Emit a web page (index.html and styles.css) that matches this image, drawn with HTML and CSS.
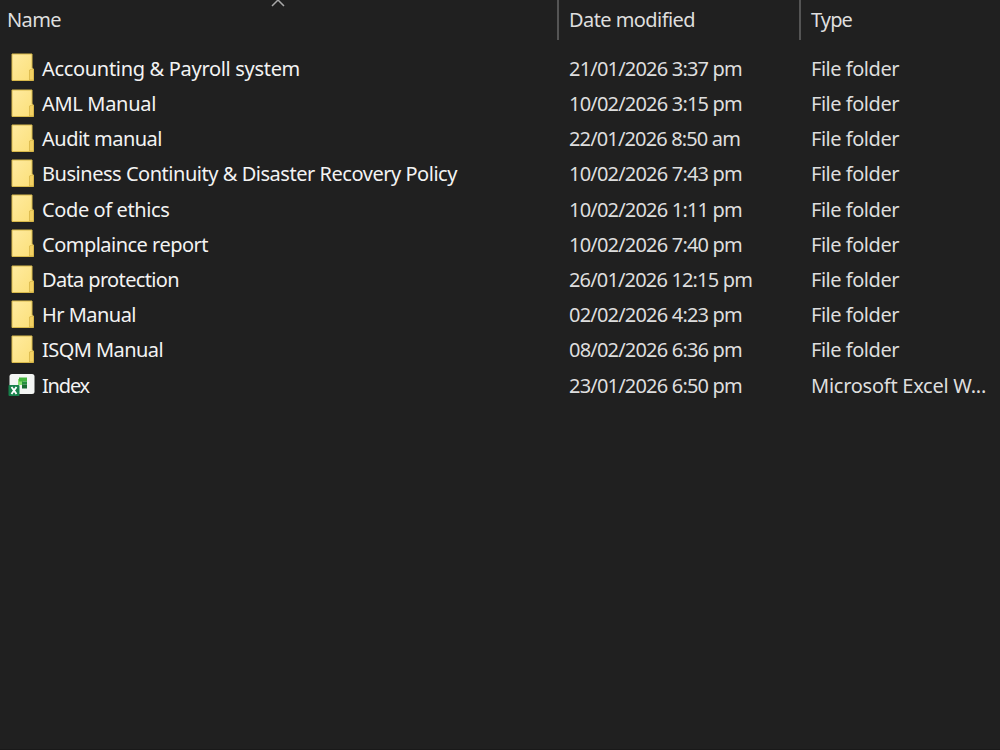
FILE: index.html
```
<!DOCTYPE html>
<html lang="en">
	<head>
		<meta charset="UTF-8" />
		<meta name="viewport" content="width=device-width, initial-scale=1.0" />
		<title>Files</title>
		<link rel="stylesheet" href="styles.css">
	</head>
	<body>
		<!-- Icons used by the rows -->
		<svg class="sprite" width="0" height="0">
			<defs>
				<linearGradient id="folderFill" x1="0" y1="0" x2="1" y2="1">
					<stop offset="0" stop-color="#ffeba0" />
					<stop offset="1" stop-color="#fbdf78" />
				</linearGradient>
			</defs>
			<symbol id="folder" viewBox="0 0 28 30">
				<path d="M4 2h20v14l1.5 1v11.5H4z" fill="url(#folderFill)" stroke="#d9ba4c" stroke-width="1" />
				<path d="M21.5 28v-10l2.5-1 1.5 1v10z" fill="#f3d163" stroke="#d2b044" stroke-width=".7" />
			</symbol>
			<symbol id="excel" viewBox="0 0 28 24">
				<rect x="1.5" y="1" width="25" height="20" rx="2.5" fill="#f3f5f3" />
				<path d="M10 6h5v6h-5z" fill="#8ae070" />
				<path d="M11 4.5h8v4h-8z" fill="#45b53f" />
				<path d="M14 8.5h5v3h-5z" fill="#23913b" />
				<path d="M14 11.5h5v4h-5z" fill="#176b31" />
				<rect x=".5" y="12" width="11" height="11" rx="1" fill="#17804b" />
				<path d="M3.5 14l5 7M8.5 14l-5 7" stroke="#fff" stroke-width="1.9" />
			</symbol>
		</svg>

		<div class="explorer">
			<div class="header">
				<div class="col name">
					<span data-width="54">Name</span>
					<svg class="sort" width="16" height="7" viewBox="0 0 16 7"><path d="M2 6l6-6 6 6" fill="none" stroke="#a8a8a8" stroke-width="1.5" /></svg>
				</div>
				<div class="col date"><span data-width="126">Date modified</span></div>
				<div class="col type"><span data-width="41">Type</span></div>
			</div>
			<div class="list" id="list"></div>
		</div>

		<script src="script.js"></script>
	</body>
</html>
```
FILE: styles.css
```
body {
	margin: 0;
	background-color: #202020;
	color: #dedede;
	font-family: "Noto Sans", sans-serif;
	font-size: 20px;
	overflow: hidden;
}
.sprite {
	position: absolute;
}
.explorer {
	box-sizing: border-box;
	height: 750px;
	border-bottom: 1px solid #191919;
}
.header,
.row {
	display: grid;
	grid-template-columns: 557px 242px 201px;
}
.header {
	height: 40px;
	line-height: 40px;
	margin-bottom: 10.7px;
}
.col {
	position: relative;
	box-sizing: border-box;
	white-space: nowrap;
}
.header .name {
	padding-left: 7px;
}
.header .date,
.header .type {
	padding-left: 12px;
	box-shadow: inset 2px 0 #545454;
}
.sort {
	position: absolute;
	left: 270px;
	top: 0;
}
.row {
	height: 35.22px;
	line-height: 35.22px;
}
.row .name {
	display: flex;
	align-items: center;
	padding-left: 8px;
	color: #f3f3f3;
}
.row .date,
.row .type {
	padding-left: 12px;
}
.icon {
	width: 28px;
	height: 30px;
	margin-right: 6px;
	flex: none;
}
.icon.folder {
	margin-top: -2px;
}
.icon.excel {
	height: 24px;
}
```
FILE: script.js
```
// name, name width, date, date width, type, type width
const files = [
	['Accounting & Payroll system', 258, '21/01/2026 3:37 pm', 173, 'File folder', 88],
	['AML Manual', 114, '10/02/2026 3:15 pm', 173, 'File folder', 88],
	['Audit manual', 120, '22/01/2026 8:50 am', 171, 'File folder', 88],
	['Business Continuity & Disaster Recovery Policy', 415, '10/02/2026 7:43 pm', 173, 'File folder', 88],
	['Code of ethics', 127.5, '10/02/2026 1:11 pm', 173, 'File folder', 88],
	['Complaince report', 166, '10/02/2026 7:40 pm', 173, 'File folder', 88],
	['Data protection', 137, '26/01/2026 12:15 pm', 183, 'File folder', 88],
	['Hr Manual', 94, '02/02/2026 4:23 pm', 173, 'File folder', 88],
	['ISQM Manual', 121, '08/02/2026 6:36 pm', 173, 'File folder', 88],
	['Index', 47, '23/01/2026 6:50 pm', 173, 'Microsoft Excel W...', 175]
]

const list = document.getElementById('list')
files.forEach(([name, nameWidth, date, dateWidth, type, typeWidth]) => {
	const icon = type === 'File folder' ? 'folder' : 'excel'
	const row = document.createElement('div')
	row.className = 'row'
	row.innerHTML = `
		<div class="col name"><svg class="icon ${icon}"><use href="#${icon}" /></svg><span data-width="${nameWidth}"></span></div>
		<div class="col date"><span data-width="${dateWidth}"></span></div>
		<div class="col type"><span data-width="${typeWidth}"></span></div>`
	const cells = row.querySelectorAll('span')
	cells[0].textContent = name
	cells[1].textContent = date
	cells[2].textContent = type
	list.appendChild(row)
})

// Tighten each label to its width
document.querySelectorAll('[data-width]').forEach(el => {
	const diff = el.dataset.width - el.getBoundingClientRect().width
	el.style.letterSpacing = diff / el.textContent.length + 'px'
})
```
